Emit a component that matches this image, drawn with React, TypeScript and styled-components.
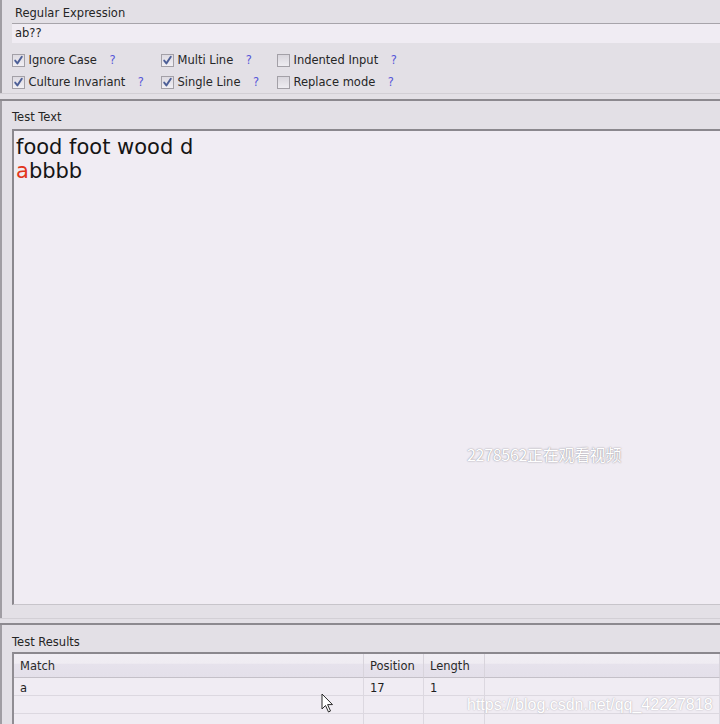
import styled, { createGlobalStyle } from "styled-components";

const GlobalStyle = createGlobalStyle`
  html, body {
    margin: 0;
    padding: 0;
    background: #e3e0e6;
    overflow: hidden;
  }
  body {
    font-family: "DejaVu Sans", Verdana, sans-serif;
    font-size: 11.5px;
    color: #222;
  }
`;

const Window = styled.div`
  position: relative;
  width: 720px;
  height: 724px;
  display: flex;
  flex-direction: column;
  overflow: hidden;
  background: #e3e0e6;
`;

const Panel = styled.section<{ $height: number; $top: number }>`
  flex: none;
  height: ${(p) => p.$height}px;
  box-sizing: border-box;
  border-left: 2px solid #a09da3;
  padding: ${(p) => p.$top}px 0 0 10px;
  display: flex;
  flex-direction: column;
`;

const Splitter = styled.div<{ $height: number }>`
  flex: none;
  height: ${(p) => p.$height}px;
  box-sizing: border-box;
  border-top: 1px solid #d2cfd5;
  border-bottom: 2px solid #8c898f;
`;

const Caption = styled.div<{ $indent?: number; $gap: number }>`
  line-height: 14px;
  padding-left: ${(p) => p.$indent ?? 0}px;
  margin-bottom: ${(p) => p.$gap}px;
  color: #252525;
`;

const PatternInput = styled.div`
  height: 20px;
  box-sizing: border-box;
  border-top: 1px solid #a7a4aa;
  background: #f0ecf3;
  padding-left: 3px;
  line-height: 19px;
  color: #1e1e1e;
`;

const Options = styled.div`
  display: grid;
  grid-template-columns: 149px 116px auto;
  grid-auto-rows: 22px;
  margin-top: 6px;
`;

const Option = styled.label`
  display: flex;
  align-items: center;
  white-space: nowrap;
`;

const Box = styled.span<{ $checked: boolean }>`
  width: 13px;
  height: 13px;
  box-sizing: border-box;
  border: 1px solid #a3a0a7;
  background: ${(p) =>
    p.$checked
      ? "linear-gradient(#dedbe2, #f1eff4)"
      : "linear-gradient(#d9d6dd, #eeecf1)"};
  display: flex;
  align-items: center;
  justify-content: center;
  svg {
    display: block;
  }
`;

const OptionText = styled.span`
  margin-left: 3.5px;
  color: #262626;
`;

const Help = styled.span`
  margin-left: 12.5px;
  color: #5656d8;
`;

const TextArea = styled.div`
  flex: none;
  height: 476px;
  box-sizing: border-box;
  border-top: 2px solid #8b888e;
  border-left: 2px solid #8b888e;
  border-bottom: 1px solid #c7c4ca;
  background: #f0ecf3;
  padding: 3.5px 0 0 2px;
  font-size: 21px;
  line-height: 24.5px;
  color: #151515;
`;

const TextLine = styled.div`
  white-space: pre;
`;

const Hit = styled.span`
  color: #e2361c;
`;

const Grid = styled.div`
  flex: 1;
  border-top: 2px solid #8b888e;
  border-left: 2px solid #908d93;
  background: #f0ecf3;
  display: grid;
  grid-template-columns: 350px 60px 61px 1fr;
  grid-auto-rows: 18px;
  grid-template-rows: 24px;
`;

const HeadCell = styled.div`
  box-sizing: border-box;
  border-bottom: 1px solid #c4c0c8;
  border-right: 1px solid #d8d4dc;
  background: linear-gradient(#f1eef4 0%, #efecf2 40%, #e6e2ec 45%, #e4e0ea 100%);
  padding: 2px 0 0 6px;
  line-height: 20px;
  color: #2a2a2a;
`;

const Cell = styled.div`
  box-sizing: border-box;
  border-bottom: 1px solid #dcd8e0;
  border-right: 1px solid #dcd8e0;
  padding: 2px 0 0 6px;
  line-height: 16px;
  color: #1e1e1e;
`;

const ViewerMark = styled.div`
  position: absolute;
  left: 467px;
  top: 443px;
  font-family: "Noto Sans CJK SC", sans-serif;
  font-size: 16px;
  line-height: 22px;
  color: #ffffff;
  text-shadow: 0 0 1px #9a97a0, 0 0 2px #b0adb5;
  letter-spacing: -0.3px;
`;

const UrlMark = styled.div`
  position: absolute;
  left: 467px;
  top: 695px;
  font-family: "Liberation Sans", Arial, sans-serif;
  font-size: 16px;
  line-height: 20px;
  color: #ffffff;
  text-shadow: 0 0 1px #b7b4bb, 0 0 2px #c9c6cd;
`;

const Pointer = styled.svg`
  position: absolute;
  left: 321px;
  top: 693px;
`;

const Check = () => (
  <svg width="11" height="11" viewBox="0 0 11 11">
    <path
      d="M2.2 5.6 L4.4 8.4 L8.8 1.8"
      fill="none"
      stroke="#4d5f97"
      strokeWidth="1.9"
      strokeLinecap="round"
      strokeLinejoin="round"
    />
  </svg>
);

const options = [
  { label: "Ignore Case", checked: true },
  { label: "Multi Line", checked: true },
  { label: "Indented Input", checked: false },
  { label: "Culture Invariant", checked: true },
  { label: "Single Line", checked: true },
  { label: "Replace mode", checked: false },
];

const emptyRows = 2;

export default function App() {
  return (
    <>
      <GlobalStyle />
      <Window>
        <Panel $height={93} $top={6}>
          <Caption $indent={3} $gap={3}>
            Regular Expression
          </Caption>
          <PatternInput>ab??</PatternInput>
          <Options>
            {options.map((o) => (
              <Option key={o.label}>
                <Box $checked={o.checked}>{o.checked && <Check />}</Box>
                <OptionText>{o.label}</OptionText>
                <Help>?</Help>
              </Option>
            ))}
          </Options>
        </Panel>
        <Splitter $height={8} />
        <Panel $height={517} $top={9}>
          <Caption $gap={5}>Test Text</Caption>
          <TextArea>
            <TextLine>food foot wood d</TextLine>
            <TextLine>
              <Hit>a</Hit>bbbb
            </TextLine>
          </TextArea>
        </Panel>
        <Splitter $height={7} />
        <Panel $height={110} $top={10}>
          <Caption $gap={3}>Test Results</Caption>
          <Grid>
            <HeadCell>Match</HeadCell>
            <HeadCell>Position</HeadCell>
            <HeadCell>Length</HeadCell>
            <HeadCell />
            <Cell>a</Cell>
            <Cell>17</Cell>
            <Cell>1</Cell>
            <Cell />
            {Array.from({ length: emptyRows * 4 }).map((_, i) => (
              <Cell key={i} />
            ))}
          </Grid>
        </Panel>
        <ViewerMark>2278562正在观看视频</ViewerMark>
        <UrlMark>https://blog.csdn.net/qq_42227818</UrlMark>
        <Pointer width="14" height="21" viewBox="0 0 14 21">
          <path
            d="M1 1 L1 16 L4.5 12.5 L7.5 19 L9.5 18 L6.6 11.6 L11.5 11.6 Z"
            fill="#ffffff"
            stroke="#2a2a2a"
            strokeWidth="1"
            strokeLinejoin="round"
          />
        </Pointer>
      </Window>
    </>
  );
}
